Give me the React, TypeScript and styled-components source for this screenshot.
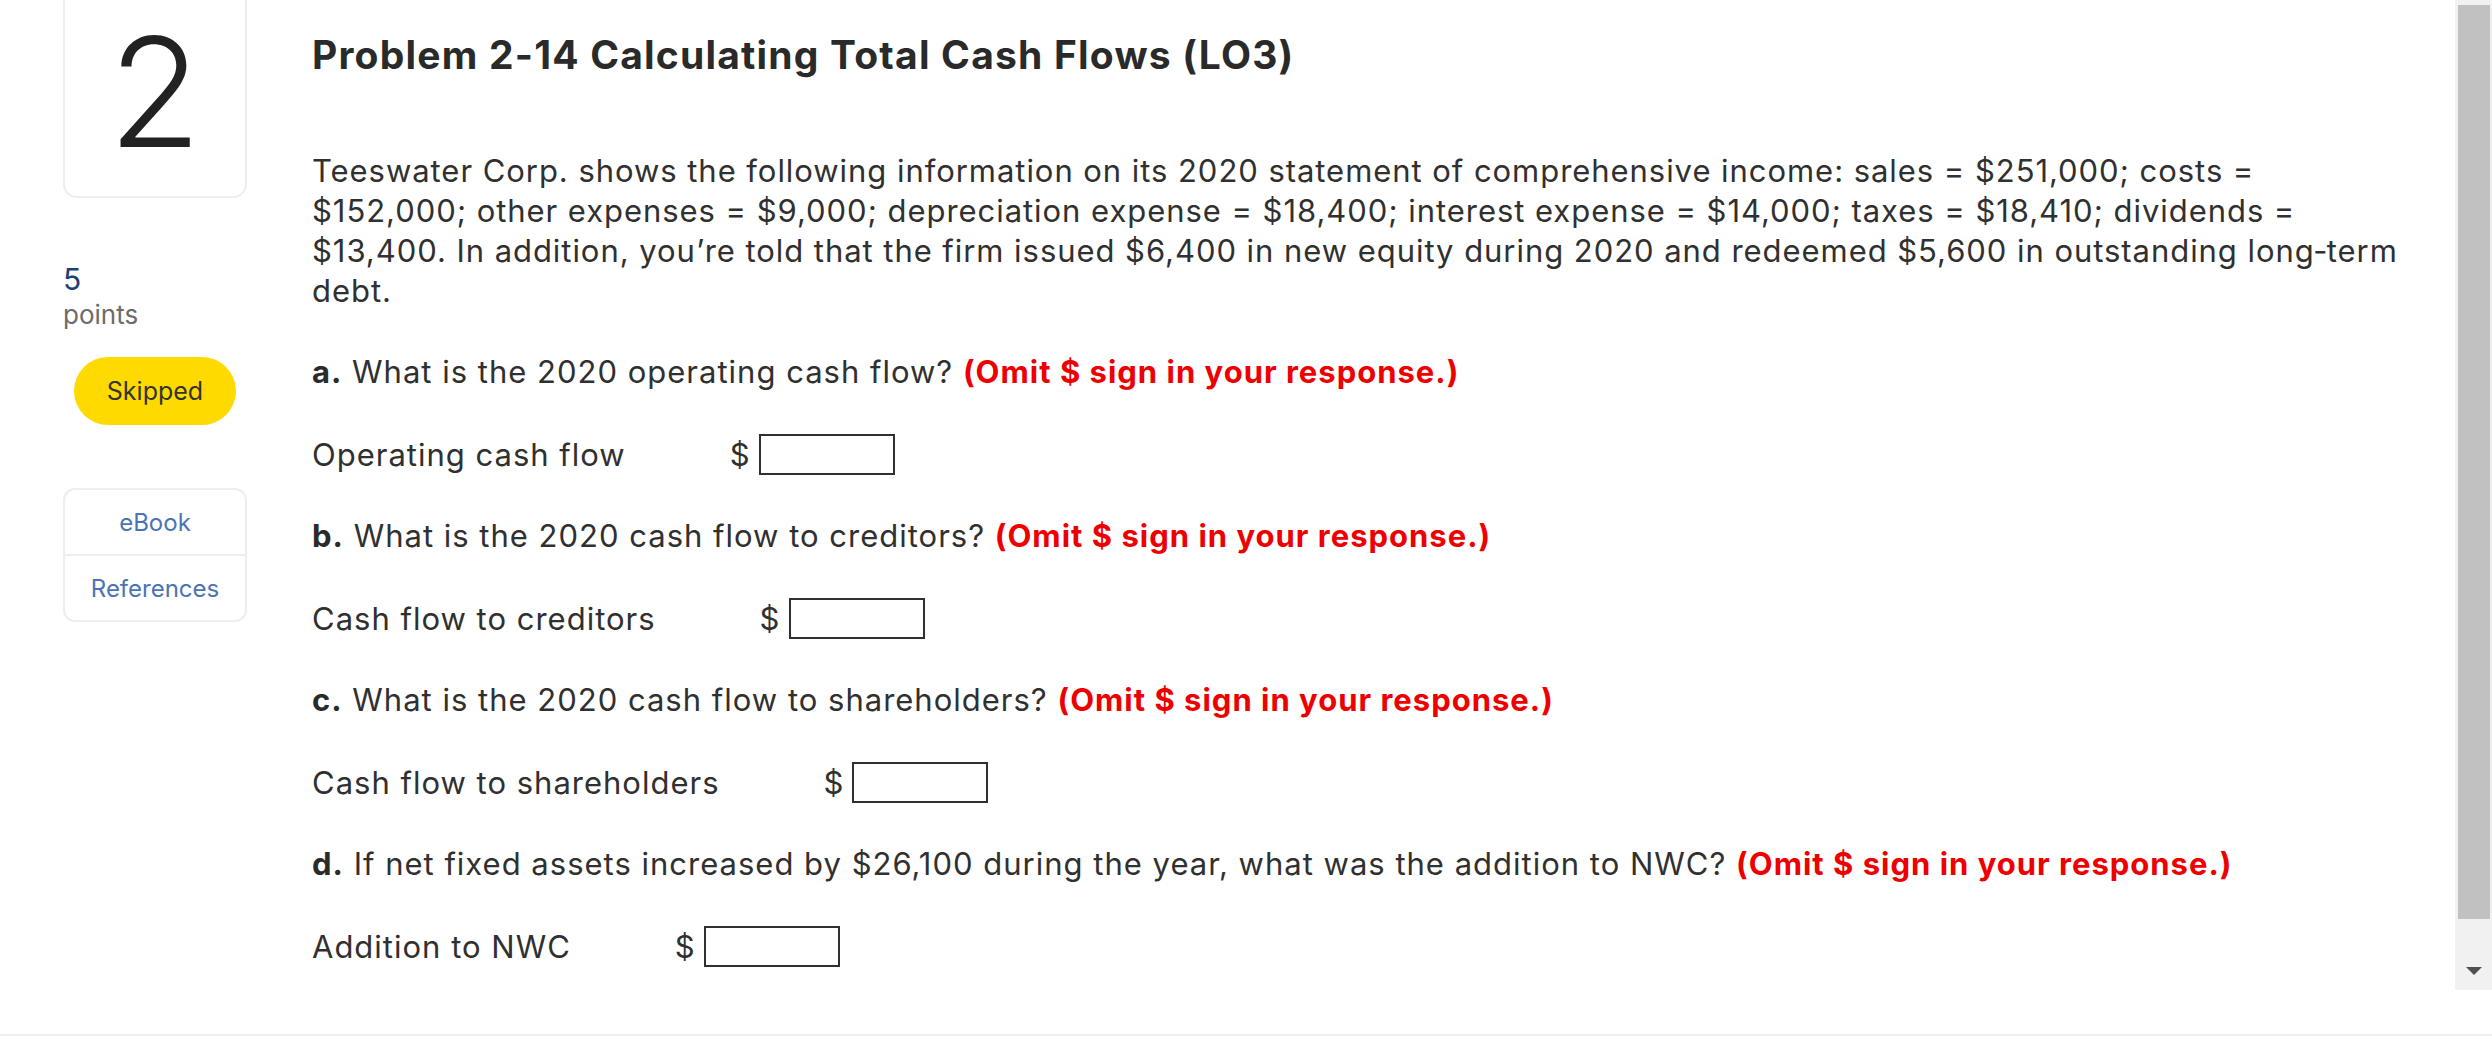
import React from 'react';
import styled, { createGlobalStyle } from 'styled-components';

const GlobalStyle = createGlobalStyle`
    body {
        margin: 0;
        background: #fff;
        font-family: Inter, 'Liberation Sans', sans-serif;
        color: #303030;
    }
`;

const Frame = styled.div`
    display: flex;
    height: 990px;
`;

const Page = styled.div`
    flex: 1;
    display: flex;
    padding-left: 63px;
    min-width: 0;
`;

const Sidebar = styled.aside`
    width: 184px;
    flex-shrink: 0;
    display: flex;
    flex-direction: column;
`;

const NumberCard = styled.div`
    height: 198px;
    box-sizing: border-box;
    border: 2px solid #eee;
    border-top: none;
    border-radius: 0 0 14px 14px;
    display: flex;
    justify-content: center;
    padding-top: 16px;
    font-size: 152px;
    line-height: 152px;
    font-weight: 300;
    color: #222;
`;

const PointsValue = styled.div`
    margin-top: 63px;
    font-size: 30px;
    line-height: 36px;
    color: #1d3f78;
`;

const PointsLabel = styled.div`
    margin-top: 2px;
    font-size: 26px;
    line-height: 32px;
    color: #6b6b6b;
`;

const StatusPill = styled.div`
    margin: 26px auto 0;
    width: 162px;
    height: 68px;
    border-radius: 34px;
    background: #ffda00;
    display: flex;
    align-items: center;
    justify-content: center;
    font-size: 25px;
    color: #333;
`;

const Resources = styled.div`
    margin-top: 63px;
    border: 2px solid #eee;
    border-radius: 12px;
    display: flex;
    flex-direction: column;
`;

const ResourceLink = styled.div<{ $last?: boolean }>`
    height: 64px;
    display: flex;
    align-items: center;
    justify-content: center;
    font-size: 24px;
    color: #4a74b4;
    border-bottom: ${(p) => (p.$last ? 'none' : '2px solid #eee')};
`;

const Content = styled.main`
    margin-left: 65px;
    flex: 1;
    padding: 32px 8px 0 0;
    min-width: 0;
`;

const Title = styled.h1`
    margin: 0;
    font-size: 39px;
    line-height: 46px;
    font-weight: 700;
    letter-spacing: 1.2px;
    color: #2a2a2a;
`;

const Intro = styled.p`
    margin: 73px 0 0;
    font-size: 31px;
    line-height: 40px;
    letter-spacing: 0.95px;
`;

const Block = styled.section`
    & + & {
        margin-top: 41px;
    }
    &:first-of-type {
        margin-top: 41px;
    }
`;

const Question = styled.p`
    margin: 0;
    font-size: 31px;
    line-height: 40px;
    letter-spacing: 1px;
`;

const Letter = styled.b`
    font-weight: 700;
    color: #2a2a2a;
`;

const Note = styled.b`
    font-weight: 700;
    color: #ee0000;
`;

const AnswerRow = styled.div`
    margin-top: 42px;
    display: flex;
    align-items: center;
    height: 41px;
    font-size: 31px;
    letter-spacing: 1px;
`;

const AnswerLabel = styled.span`
    padding-right: 104px;
`;

const Dollar = styled.span`
    margin-right: 8px;
`;

const AnswerBox = styled.input`
    width: 136px;
    height: 41px;
    box-sizing: border-box;
    border: 2px solid #303030;
    border-radius: 0;
    padding: 0 6px;
    font: inherit;
    background: #fff;
`;

const ScrollTrack = styled.div`
    width: 37px;
    flex-shrink: 0;
    background: #f1f1f1;
    display: flex;
    flex-direction: column;
    padding: 5px 2px 0 3px;
    box-sizing: border-box;
`;

const Thumb = styled.div`
    flex: 1;
    background: #c1c1c1;
`;

const ArrowButton = styled.div`
    height: 71px;
    display: flex;
    justify-content: center;
    align-items: flex-end;
    padding-bottom: 15px;
    box-sizing: border-box;
`;

const ArrowDown = styled.div`
    width: 0;
    height: 0;
    border-left: 8px solid transparent;
    border-right: 8px solid transparent;
    border-top: 8px solid #505050;
`;

const FooterLine = styled.div`
    margin-top: 44px;
    height: 2px;
    background: #efefef;
`;

const introLines = [
    'Teeswater Corp. shows the following information on its 2020 statement of comprehensive income: sales = $251,000; costs =',
    '$152,000; other expenses = $9,000; depreciation expense = $18,400; interest expense = $14,000; taxes = $18,410; dividends =',
    '$13,400. In addition, you’re told that the firm issued $6,400 in new equity during 2020 and redeemed $5,600 in outstanding long‑term',
    'debt.',
];

const parts = [
    {
        letter: 'a.',
        text: 'What is the 2020 operating cash flow?',
        label: 'Operating cash flow',
    },
    {
        letter: 'b.',
        text: 'What is the 2020 cash flow to creditors?',
        label: 'Cash flow to creditors',
    },
    {
        letter: 'c.',
        text: 'What is the 2020 cash flow to shareholders?',
        label: 'Cash flow to shareholders',
    },
    {
        letter: 'd.',
        text: 'If net fixed assets increased by $26,100 during the year, what was the addition to NWC?',
        label: 'Addition to NWC',
    },
];

const App = () => {
    return (
        <>
            <GlobalStyle />
            <Frame>
                <Page>
                    <Sidebar>
                        <NumberCard>2</NumberCard>
                        <PointsValue>5</PointsValue>
                        <PointsLabel>points</PointsLabel>
                        <StatusPill>Skipped</StatusPill>
                        <Resources>
                            <ResourceLink>eBook</ResourceLink>
                            <ResourceLink $last>References</ResourceLink>
                        </Resources>
                    </Sidebar>
                    <Content>
                        <Title>Problem 2-14 Calculating Total Cash Flows (LO3)</Title>
                        <Intro>
                            {introLines.map((line, i) => (
                                <React.Fragment key={i}>
                                    {line}
                                    {i < introLines.length - 1 && <br />}
                                </React.Fragment>
                            ))}
                        </Intro>
                        {parts.map((part) => (
                            <Block key={part.letter}>
                                <Question>
                                    <Letter>{part.letter}</Letter> {part.text}{' '}
                                    <Note>(Omit $ sign in your response.)</Note>
                                </Question>
                                <AnswerRow>
                                    <AnswerLabel>{part.label}</AnswerLabel>
                                    <Dollar>$</Dollar>
                                    <AnswerBox type="text" />
                                </AnswerRow>
                            </Block>
                        ))}
                    </Content>
                </Page>
                <ScrollTrack>
                    <Thumb />
                    <ArrowButton>
                        <ArrowDown />
                    </ArrowButton>
                </ScrollTrack>
            </Frame>
            <FooterLine />
        </>
    );
};

export default App;
